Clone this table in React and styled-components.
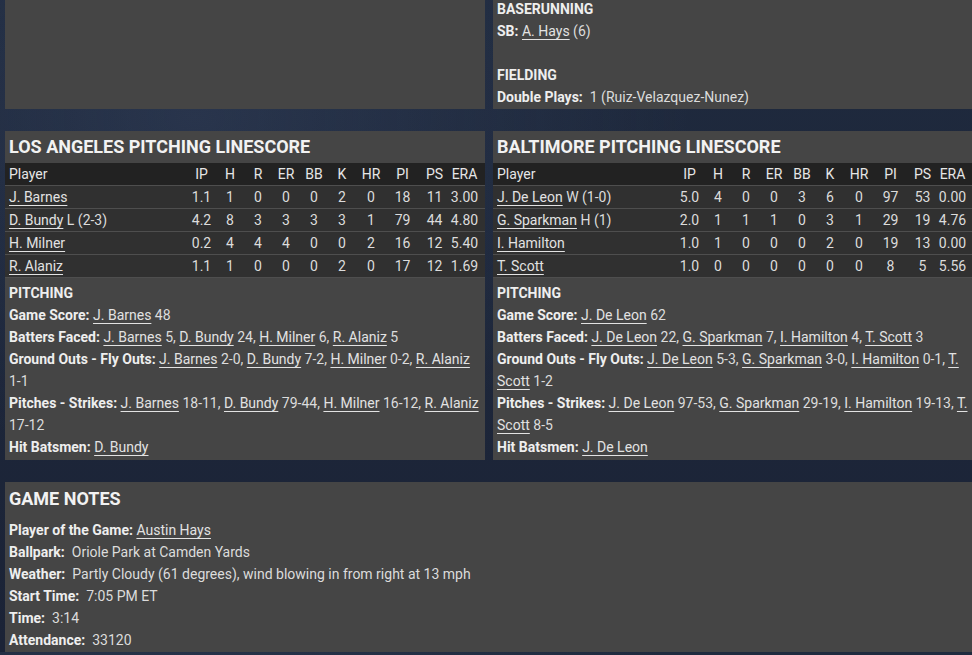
import React from 'react'
import styled, { createGlobalStyle } from 'styled-components'

const GlobalStyle = createGlobalStyle`
    html, body {
        margin: 0;
        padding: 0;
        overflow: hidden;
    }
    body {
        background: #1d2639;
        background-image:
            radial-gradient(ellipse at 20% 18%, rgba(60, 75, 105, 0.35), transparent 45%),
            linear-gradient(180deg, #1f2a3e 0%, #1b2336 100%);
        font-family: Roboto, "Noto Sans", sans-serif;
        color: #dedede;
        font-size: 14px;
    }
`

const laPitchers = [
    { name: 'J. Barnes', note: '', stats: ['1.1', '1', '0', '0', '0', '2', '0', '18', '11', '3.00'] },
    { name: 'D. Bundy', note: 'L (2-3)', stats: ['4.2', '8', '3', '3', '3', '3', '1', '79', '44', '4.80'] },
    { name: 'H. Milner', note: '', stats: ['0.2', '4', '4', '4', '0', '0', '2', '16', '12', '5.40'] },
    { name: 'R. Alaniz', note: '', stats: ['1.1', '1', '0', '0', '0', '2', '0', '17', '12', '1.69'] },
]

const balPitchers = [
    { name: 'J. De Leon', note: 'W (1-0)', stats: ['5.0', '4', '0', '0', '3', '6', '0', '97', '53', '0.00'] },
    { name: 'G. Sparkman', note: 'H (1)', stats: ['2.0', '1', '1', '1', '0', '3', '1', '29', '19', '4.76'] },
    { name: 'I. Hamilton', note: '', stats: ['1.0', '1', '0', '0', '0', '2', '0', '19', '13', '0.00'] },
    { name: 'T. Scott', note: '', stats: ['1.0', '0', '0', '0', '0', '0', '0', '8', '5', '5.56'] },
]

const columns = ['IP', 'H', 'R', 'ER', 'BB', 'K', 'HR', 'PI', 'PS', 'ERA']

// list of [name, value] pairs -> "name value, name value"
function PlayerList({ items }) {
    return items.map(([name, value], i) => (
        <React.Fragment key={name}>
            <Link>{name}</Link>{value && ` ${value}`}{i < items.length - 1 ? ', ' : ''}
        </React.Fragment>
    ))
}

function Linescore({ team, pitchers, notes }) {
    return (
        <Panel>
            <Title>{team} PITCHING LINESCORE</Title>
            <Table>
                <HeadRow>
                    <Cell left>Player</Cell>
                    {columns.map(c => <Cell key={c}>{c}</Cell>)}
                </HeadRow>
                {pitchers.map(p => (
                    <Row key={p.name}>
                        <Cell left>
                            <Link>{p.name}</Link>{p.note && ` ${p.note}`}
                        </Cell>
                        {p.stats.map((s, i) => <Cell key={i}>{s}</Cell>)}
                    </Row>
                ))}
            </Table>
            <Notes>
                <Line><Label>PITCHING</Label></Line>
                {notes.map(([label, items]) => (
                    <Line key={label}>
                        <Label>{label}:</Label> <PlayerList items={items} />
                    </Line>
                ))}
            </Notes>
        </Panel>
    )
}

function App() {
    return (
        <>
            <GlobalStyle />
            <Page>
                <Panel />
                <Panel>
                    <Info>
                        <Line><Label>BASERUNNING</Label></Line>
                        <Line><Label>SB:</Label> <Link>A. Hays</Link> (6)</Line>
                        <Line>&nbsp;</Line>
                        <Line><Label>FIELDING</Label></Line>
                        <Line><Label gap>Double Plays:</Label>1 (Ruiz-Velazquez-Nunez)</Line>
                    </Info>
                </Panel>

                <Linescore
                    team="LOS ANGELES"
                    pitchers={laPitchers}
                    notes={[
                        ['Game Score', [['J. Barnes', '48']]],
                        ['Batters Faced', [['J. Barnes', '5'], ['D. Bundy', '24'], ['H. Milner', '6'], ['R. Alaniz', '5']]],
                        ['Ground Outs - Fly Outs', [['J. Barnes', '2-0'], ['D. Bundy', '7-2'], ['H. Milner', '0-2'], ['R. Alaniz', '1-1']]],
                        ['Pitches - Strikes', [['J. Barnes', '18-11'], ['D. Bundy', '79-44'], ['H. Milner', '16-12'], ['R. Alaniz', '17-12']]],
                        ['Hit Batsmen', [['D. Bundy', '']]],
                    ]}
                />
                <Linescore
                    team="BALTIMORE"
                    pitchers={balPitchers}
                    notes={[
                        ['Game Score', [['J. De Leon', '62']]],
                        ['Batters Faced', [['J. De Leon', '22'], ['G. Sparkman', '7'], ['I. Hamilton', '4'], ['T. Scott', '3']]],
                        ['Ground Outs - Fly Outs', [['J. De Leon', '5-3'], ['G. Sparkman', '3-0'], ['I. Hamilton', '0-1'], ['T. Scott', '1-2']]],
                        ['Pitches - Strikes', [['J. De Leon', '97-53'], ['G. Sparkman', '29-19'], ['I. Hamilton', '19-13'], ['T. Scott', '8-5']]],
                        ['Hit Batsmen', [['J. De Leon', '']]],
                    ]}
                />

                <Panel wide>
                    <NotesTitle>GAME NOTES</NotesTitle>
                    <Line><Label>Player of the Game:</Label> <Link>Austin Hays</Link></Line>
                    <Line><Label gap>Ballpark:</Label>Oriole Park at Camden Yards</Line>
                    <Line><Label gap>Weather:</Label>Partly Cloudy (61 degrees), wind blowing in from right at 13 mph</Line>
                    <Line><Label gap>Start Time:</Label>7:05 PM ET</Line>
                    <Line><Label gap>Time:</Label>3:14</Line>
                    <Line><Label gap>Attendance:</Label>33120</Line>
                </Panel>
            </Page>
        </>
    )
}

export default App

const Page = styled.div`
    display: grid;
    grid-template-columns: 480px 480px;
    grid-template-rows: 109px 329px 170px;
    column-gap: 8px;
    row-gap: 22px;
    padding-left: 5px;
    width: 973px;
`

const Panel = styled.div`
    background: #454545;
    grid-column: ${props => props.wide ? '1 / -1' : 'auto'};
    overflow: hidden;
    box-sizing: border-box;
    padding: 0 3px 0 4px;
`

const Info = styled.div`
    margin-top: -2px;
`

const Title = styled.div`
    font-size: 18px;
    font-weight: 700;
    line-height: 32px;
    color: #f2f2f2;
`

const NotesTitle = styled(Title)`
    line-height: 34px;
    margin-bottom: 3px;
`

const Table = styled.div`
    margin: 0 -3px 0 -4px;
`

const HeadRow = styled.div`
    display: grid;
    grid-template-columns: 1fr 29px 28px 28px 28px 28px 28px 30px 33px 31px 29px;
    padding: 0 6px 0 4px;
    height: 23px;
    box-sizing: border-box;
    align-items: center;
    background: #222222;
    border-bottom: 1px solid #4e4e4e;
    color: #e6e6e6;
`

const Row = styled(HeadRow)`
    background: #303030;
    color: #dcdcdc;
`

const Cell = styled.div`
    text-align: ${props => props.left ? 'left' : 'center'};
    white-space: nowrap;
`

const Notes = styled.div`
    padding-top: 4px;
`

const Line = styled.div`
    line-height: 22px;
    color: #dcdcdc;
`

const Label = styled.span`
    font-weight: 700;
    color: #eeeeee;
    margin-right: ${props => props.gap ? '7px' : '0'};
`

const Link = styled.span`
    color: #e2e2e2;
    text-decoration: underline;
    text-underline-offset: 3px;
    cursor: pointer;
`
